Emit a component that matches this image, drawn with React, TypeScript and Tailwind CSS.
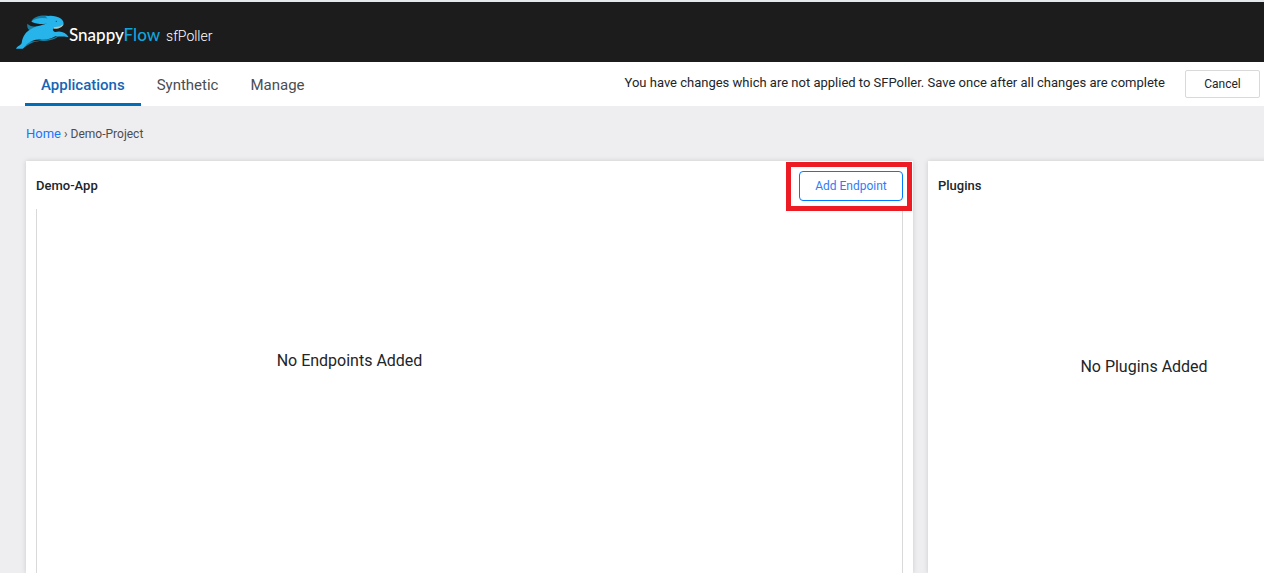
import { useState } from 'react';

const tabs = ['Applications', 'Synthetic', 'Manage'];

function RabbitLogo() {
  return (
    <svg viewBox="48 46 159 102" className="h-[34px] w-[53px]" aria-hidden="true">
      {/* tail, far ear and far legs */}
      <path d="M82 72 C90 80 102 82 118 80 L104 96 C86 94 80 86 82 72 Z" fill="#1a7da0" />
      <path d="M94 65 C100 52 120 46 142 48 C152 49 158 54 156 62 L140 66 Z" fill="#1a7da0" />
      <path d="M76 132 C90 120 150 126 180 106 C166 120 148 124 126 124 C104 124 92 130 74 143 Z" fill="#1a7da0" />
      {/* near ear */}
      <path d="M94 66 C106 55 126 52 152 58 L152 71 C130 75 108 73 94 66 Z" fill="#27b4ea" />
      {/* head and body */}
      <path d="M136 50 C150 46 170 48 181 56 C189 62 193 69 190 77 C182 82 172 84 163 84 C156 88 158 94 166 97 C182 92 198 98 206 113 C192 108 180 112 166 110 C152 118 140 121 124 120 C108 118 96 122 84 131 C76 136 76 143 68 147 L48 147 C52 138 62 138 65 130 C68 110 78 96 92 89 C106 79 124 79 140 71 C146 66 146 58 136 50 Z" fill="#27b4ea" />
      <path d="M163 82 C174 83 184 79 190 74 C187 84 174 89 160 87 Z" fill="#b7c9b8" />
      <circle cx="169" cy="65" r="2" fill="#173f50" />
    </svg>
  );
}

export default function App() {
  const [active, setActive] = useState('Applications');

  return (
    <div className="flex min-h-screen flex-col overflow-hidden bg-[#eeeef0] font-['Roboto',sans-serif] text-[#212529]">
      <header className="flex h-[62px] items-center border-t-2 border-[#e4e8ea] bg-[#1c1c1c] px-4">
        <RabbitLogo />
        <div className="flex items-baseline gap-[6px] pt-[5px] text-white">
          <span className="font-['Lato',sans-serif] text-[17px] font-medium">
            Snappy<span className="text-[#0fa5dc]">Flow</span>
          </span>
          <span className="text-sm font-light">sfPoller</span>
        </div>
      </header>

      <div className="flex h-11 items-stretch justify-between bg-white pr-1 pl-[25px]">
        <nav className="flex">
          {tabs.map(tab => (
            <button
              key={tab}
              onClick={() => setActive(tab)}
              className={`border-b-3 px-4 pt-[6px] text-[15px] ${
                active === tab
                  ? 'border-[#006db8] font-medium text-[#1565b5]'
                  : 'border-transparent text-[#4a4d52]'
              }`}
            >
              {tab}
            </button>
          ))}
        </nav>
        <div className="flex items-center gap-5">
          <p className="pb-[2px] text-[13px]">
            You have changes which are not applied to SFPoller. Save once after all changes are complete
          </p>
          <button className="h-7 w-[75px] rounded-xs border border-[#d9d9d9] bg-white text-xs">Cancel</button>
        </div>
      </div>

      <main className="flex flex-1 flex-col pl-[26px]">
        <div className="flex h-[55px] items-center gap-[3px] text-[13px]">
          <a href="#home" className="text-[#1677ff]">Home</a>
          <span className="text-xs text-[#4a4d52]">›</span>
          <span className="text-xs text-[#4a4d52]">Demo-Project</span>
        </div>

        <div className="-mr-24 grid flex-1 grid-cols-[887fr_432fr] gap-[15px]">
          <section className="flex flex-col bg-white px-[10px] shadow-[0_0_5px_rgba(0,0,0,0.15)]">
            <div className="flex h-12 items-center justify-between pt-[2px]">
              <h2 className="text-[13px] font-medium">Demo-App</h2>
              <button className="relative h-[30px] w-[104px] rounded-sm border border-[#007bff] text-xs text-[#2f7df6]">
                Add Endpoint
                <span className="pointer-events-none absolute -top-[10px] -right-[10px] -bottom-[11px] -left-[14px] border-5 border-[#ed1c24]" />
              </button>
            </div>
            <div className="flex-1 border-x border-[#d9d9d9] pt-[140px] pr-60 text-center">No Endpoints Added</div>
          </section>

          <section className="flex flex-col bg-white px-[10px] shadow-[0_0_5px_rgba(0,0,0,0.15)]">
            <div className="flex h-12 items-center pt-[2px]">
              <h2 className="text-[13px] font-medium">Plugins</h2>
            </div>
            <div className="flex-1 pt-[146px] text-center">No Plugins Added</div>
          </section>
        </div>
      </main>
    </div>
  );
}
